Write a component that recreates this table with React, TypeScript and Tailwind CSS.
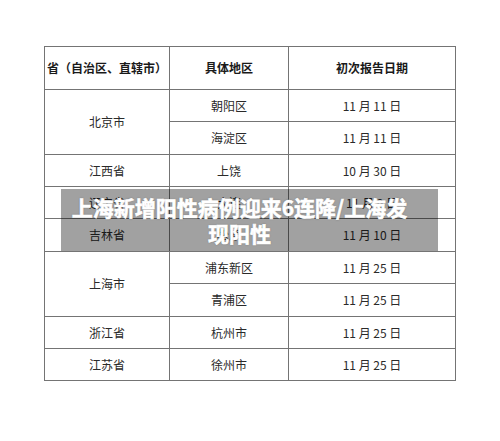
import React from 'react';

const font = { fontFamily: '"Noto Sans CJK SC", "Noto Sans", sans-serif' };

type Cell = { text: string; span?: boolean; head?: boolean };

const rows: Cell[][] = [
  [{ text: '省（自治区、直辖市）', head: true }, { text: '具体地区', head: true }, { text: '初次报告日期', head: true }],
  [{ text: '北京市', span: true }, { text: '朝阳区' }, { text: '11 月 11 日' }],
  [{ text: '海淀区' }, { text: '11 月 11 日' }],
  [{ text: '江西省' }, { text: '上饶' }, { text: '10 月 30 日' }],
  [{ text: '辽宁省' }, { text: '大连' }, { text: '11 月 9 日' }],
  [{ text: '吉林省' }, { text: '松原' }, { text: '11 月 10 日' }],
  [{ text: '上海市', span: true }, { text: '浦东新区' }, { text: '11 月 25 日' }],
  [{ text: '青浦区' }, { text: '11 月 25 日' }],
  [{ text: '浙江省' }, { text: '杭州市' }, { text: '11 月 25 日' }],
  [{ text: '江苏省' }, { text: '徐州市' }, { text: '11 月 25 日' }],
];

const App: React.FC = () => {
  return (
    <div className="relative w-[500px] h-[441px] bg-white overflow-hidden" style={font}>
      <div className="pt-[46px] pl-[44px]">
        <div className="grid grid-cols-[125px_119px_167px] grid-rows-[43px_32px_33px_32px_32px_33px_32px_33px_32px_32px] w-[412px] border-l border-t border-[#747474] text-[12px] text-[#2a2a2a]">
          {rows.map((row, i) =>
            row.map((c, j) => (
              <div
                key={`${i}-${j}`}
                className={`flex items-center justify-center border-r border-b border-[#747474] ${c.span ? 'row-span-2' : ''} ${c.head ? 'font-bold text-[#1a1a1a]' : ''}`}
              >
                {c.text}
              </div>
            ))
          )}
        </div>
      </div>

      <div className="absolute left-[61px] top-[189px] w-[377px] h-[62px] bg-black/[0.37] pl-[2px] pr-[22px] flex items-center">
        <p className="w-full text-center text-white font-bold text-[21px] leading-[26px] [-webkit-text-stroke:0.6px_white] [text-shadow:0_0_2px_rgba(0,0,0,0.35)]">
          上海新增阳性病例迎来6连降/上海发现阳性
        </p>
      </div>
    </div>
  );
};

export default App;
